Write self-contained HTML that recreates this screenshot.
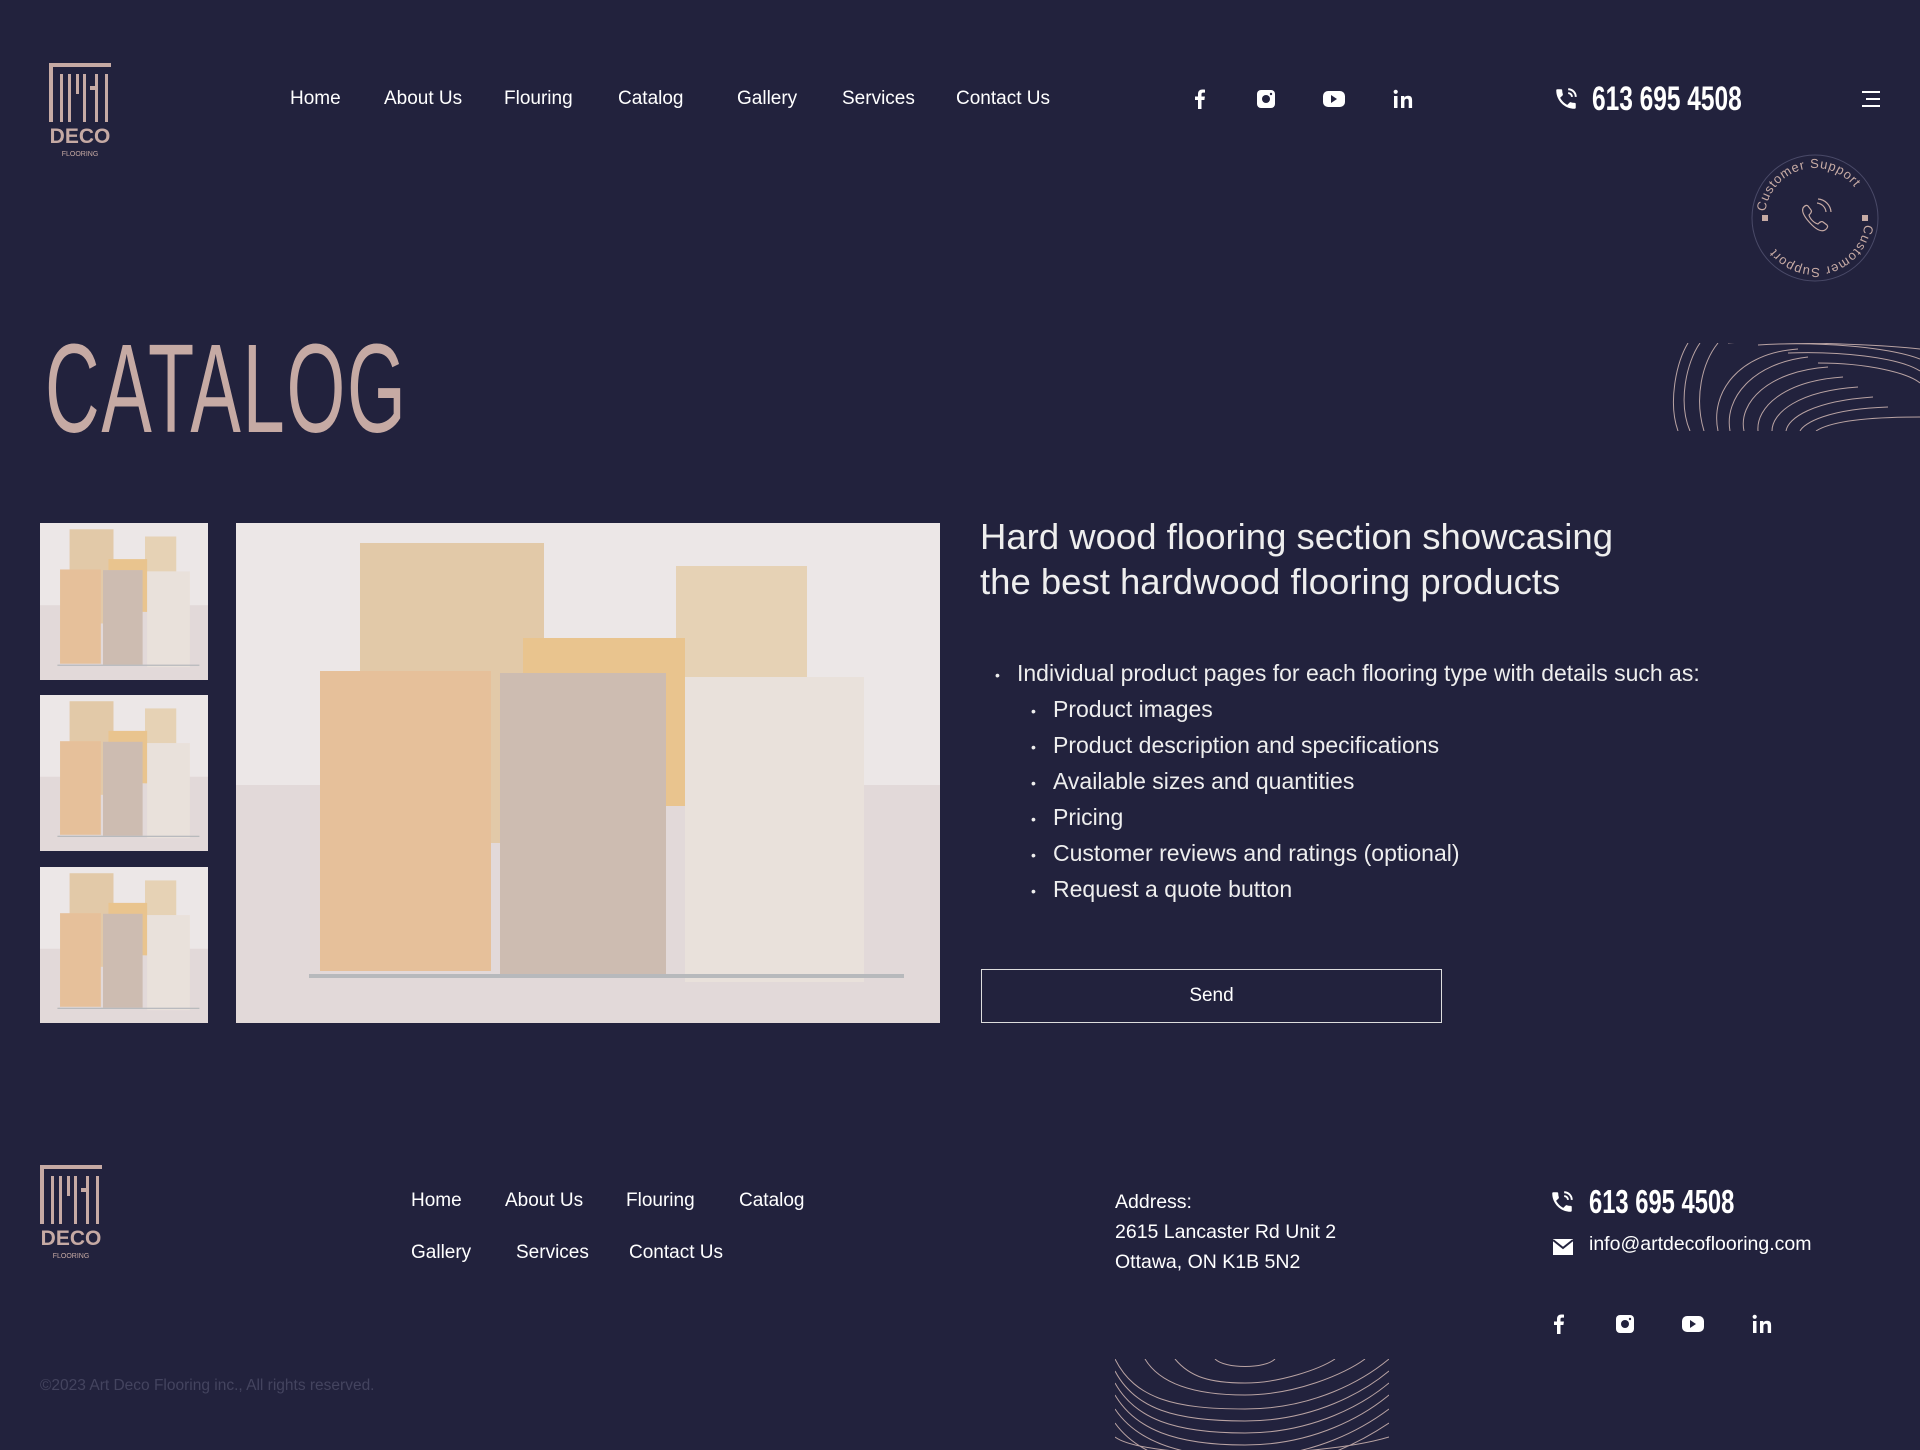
<!DOCTYPE html>
<html><head><meta charset="utf-8"><style>
*{margin:0;padding:0;box-sizing:border-box}
body{width:1920px;height:1450px;background:#22223d;font-family:"Liberation Sans",sans-serif;color:#fff;position:relative;overflow:hidden}
.a{position:absolute;white-space:nowrap}
.nav{font-size:19px;top:88px}
.cond{font-weight:bold;transform-origin:top left}
.fn{font-size:19px}
ul{list-style:none}
li{position:relative;padding-left:0}
li:before{content:"•";position:absolute;left:-22px;font-size:14px;top:2px}
</style></head><body>
<svg width="0" height="0" style="position:absolute">
<defs>
<symbol id="logo" viewBox="0 0 66 100">
<rect x="0" y="0" width="62" height="4" fill="#c6aaa4"/>
<rect x="0" y="0" width="4" height="59" fill="#c6aaa4"/>
<rect x="11" y="11" width="3" height="48" fill="#c6aaa4"/>
<rect x="19" y="11" width="3" height="48" fill="#c6aaa4"/>
<rect x="27" y="11" width="3" height="20" fill="#c6aaa4"/>
<rect x="34" y="11" width="3" height="48" fill="#c6aaa4"/>
<rect x="41" y="23" width="5" height="4" fill="#c6aaa4"/>
<rect x="46" y="11" width="3" height="48" fill="#c6aaa4"/>
<rect x="56" y="11" width="3" height="48" fill="#c6aaa4"/>
<text x="31" y="80" text-anchor="middle" font-family="Liberation Sans" font-weight="bold" font-size="21" fill="#c6aaa4">DECO</text>
<text x="31" y="93" text-anchor="middle" font-family="Liberation Sans" font-size="7" fill="#c6aaa4">FLOORING</text>
</symbol>
<symbol id="img" viewBox="0 0 704 500" preserveAspectRatio="none">
<rect width="704" height="500" fill="#ece7e7"/>
<rect y="262" width="704" height="238" fill="#e2d9d9"/>
<rect x="124" y="20" width="184" height="300" fill="#e2c9a8"/>
<rect x="440" y="43" width="131" height="240" fill="#e6d2b5"/>
<rect x="287" y="115" width="162" height="168" fill="#e9c48e"/>
<rect x="84" y="148" width="171" height="300" fill="#e6c09a"/>
<rect x="264" y="150" width="166" height="301" fill="#cdbcb1"/>
<rect x="449" y="154" width="179" height="305" fill="#e9e1db"/>
<rect x="73" y="451" width="595" height="4" fill="#b7b9bc"/>
</symbol>
<symbol id="ph" viewBox="0 0 24 24"><path d="M6.6 10.8c1.4 2.8 3.8 5.1 6.6 6.6l2.2-2.2c.3-.3.7-.4 1-.2 1.1.4 2.300.6 3.600.6.600 0 1 .4 1 1V20c0 .6-.4 1-1 1C10.6 21 3 13.4 3 4c0-.6.4-1 1-1h3.5c.6 0 1 .4 1 1 0 1.3.2 2.5.6 3.6.1.3 0 .7-.2 1z" fill="#fff"/><path d="M14 3a7 7 0 0 1 7 7M14 6.5a3.5 3.5 0 0 1 3.5 3.5" stroke="#fff" stroke-width="1.8" fill="none"/></symbol>
<symbol id="soc" viewBox="0 0 240 24">
<path d="M9 22v-9H6v-3.5h3V7c0-3 1.8-4.5 4.4-4.5 1.2 0 2.3.1 2.6.1v3h-1.8c-1.4 0-1.7.7-1.7 1.7v2.2h3.4l-.5 3.5h-2.9v9z" fill="#fff"/>
<g transform="translate(9,0)"><rect x="59" y="3" width="18" height="18" rx="4" fill="#fff"/><circle cx="68" cy="12" r="4" fill="#22223d"/><circle cx="73" cy="7" r="1.2" fill="#22223d"/></g>
<g transform="translate(20,0)"><rect x="114" y="4" width="22" height="16" rx="5" fill="#fff"/><path d="M122 8v8l6-4z" fill="#22223d"/></g>
<g transform="translate(31,0)"><rect x="174" y="9" width="3.5" height="12" fill="#fff"/><circle cx="175.7" cy="4.8" r="2.1" fill="#fff"/><path d="M181 9h3.3v1.7c.7-1.2 2-2 3.8-2 3.3 0 4 2 4 4.8V21h-3.4v-6.6c0-1.6-.3-2.7-1.9-2.7s-2.4 1.2-2.4 2.7V21H181z" fill="#fff"/></g>
</symbol>
</defs></svg>

<!-- header -->
<svg class="a" style="left:49px;top:63px" width="66" height="100"><use href="#logo"/></svg>
<div class="a nav" style="left:290px">Home</div>
<div class="a nav" style="left:384px">About Us</div>
<div class="a nav" style="left:504px">Flouring</div>
<div class="a nav" style="left:618px">Catalog</div>
<div class="a nav" style="left:737px">Gallery</div>
<div class="a nav" style="left:842px">Services</div>
<div class="a nav" style="left:956px">Contact Us</div>
<svg class="a" style="left:1189px;top:87px" width="240" height="24"><use href="#soc"/></svg>
<svg class="a" style="left:1553px;top:86px" width="26" height="26"><use href="#ph"/></svg>
<div class="a cond" style="left:1592px;top:80px;font-size:34px;transform:scaleX(0.72)">613 695 4508</div>
<div class="a" style="left:1862px;top:91px;width:18px;height:2px;background:#fff"></div>
<div class="a" style="left:1866px;top:98px;width:14px;height:2px;background:#fff"></div>
<div class="a" style="left:1862px;top:105px;width:18px;height:2px;background:#fff"></div>
<svg class="a" style="left:1750px;top:153px" width="130" height="130" viewBox="0 0 130 130">
<defs><path id="cp" d="M65 65m-50 0a50 50 0 1 1 100 0a50 50 0 1 1 -100 0"/></defs>
<circle cx="65" cy="65" r="63" fill="none" stroke="#4a4a68" stroke-width="1"/>
<text font-family="Liberation Sans" font-size="13" fill="#c6aaa4" letter-spacing="0.8"><textPath href="#cp" startOffset="2%">Customer Support</textPath></text>
<text font-family="Liberation Sans" font-size="13" fill="#c6aaa4" letter-spacing="0.8"><textPath href="#cp" startOffset="52%">Customer Support</textPath></text>
<rect x="12" y="62" width="6" height="6" fill="#c6aaa4"/><rect x="112" y="62" width="6" height="6" fill="#c6aaa4"/>
<path d="M53 55c2-3 4-3 5-2l3 4c1 1 0 3-1 4l-1 1c1 4 5 8 9 9l1-1c1-1 3-2 4-1l4 3c1 1 1 3-2 5-3 2-8 0-13-5s-11-12-9-17z" fill="none" stroke="#c6aaa4" stroke-width="1.2"/>
<path d="M67 50a10 10 0 0 1 9 9M68 46a14 14 0 0 1 13 13" fill="none" stroke="#c6aaa4" stroke-width="1.2"/>
</svg>

<div class="a" style="left:45px;top:316px;font-size:126px;color:#c6aaa4;transform:scaleX(0.6);transform-origin:top left;letter-spacing:3px">CATALOG</div>
<svg class="a" style="left:1668px;top:343px" width="252" height="88" viewBox="0 0 252 88">
<g fill="none" stroke="#b9a3a3" stroke-width="1">
<path d="M10 88C0 60 8 20 20 0"/><path d="M22 88C10 60 18 20 32 0"/><path d="M36 88C26 55 34 20 50 0"/>
<path d="M50 88C42 50 70 10 130 6"/><path d="M62 88C56 55 85 20 140 14"/><path d="M76 88C70 60 100 28 160 24"/>
<path d="M90 88C88 65 115 38 175 34"/><path d="M104 88C104 70 130 48 190 44"/><path d="M118 88C120 75 145 58 205 54"/>
<path d="M132 88C136 80 160 66 220 64"/><path d="M148 88C160 80 190 74 252 74"/><path d="M60 0C70 -2 200 0 252 6"/>
<path d="M90 2C150 -2 220 4 252 16"/><path d="M120 10C170 8 230 14 252 28"/><path d="M150 20C200 20 240 30 252 40"/>
</g></svg>

<!-- images -->
<svg class="a" style="left:40px;top:523px" width="168" height="157"><use href="#img" width="168" height="157"/></svg>
<svg class="a" style="left:40px;top:695px" width="168" height="156"><use href="#img" width="168" height="156"/></svg>
<svg class="a" style="left:40px;top:867px" width="168" height="156"><use href="#img" width="168" height="156"/></svg>
<svg class="a" style="left:236px;top:523px" width="704" height="500"><use href="#img" width="704" height="500"/></svg>

<div class="a" style="left:980px;top:514px;font-size:36.5px;line-height:45px;color:#eee">Hard wood flooring section showcasing<br>the best hardwood flooring products</div>
<ul class="a" style="left:1017px;top:655px;font-size:23px;line-height:36px;color:#eee">
<li>Individual product pages for each flooring type with details such as:</li>
<li style="margin-left:36px">Product images</li>
<li style="margin-left:36px">Product description and specifications</li>
<li style="margin-left:36px">Available sizes and quantities</li>
<li style="margin-left:36px">Pricing</li>
<li style="margin-left:36px">Customer reviews and ratings (optional)</li>
<li style="margin-left:36px">Request a quote button</li>
</ul>
<div class="a" style="left:981px;top:969px;width:461px;height:54px;border:1px solid #ddd;text-align:center;line-height:52px;font-size:19px">Send</div>

<!-- footer -->
<svg class="a" style="left:40px;top:1165px" width="66" height="100"><use href="#logo"/></svg>
<div class="a fn" style="left:411px;top:1190px">Home</div>
<div class="a fn" style="left:505px;top:1190px">About Us</div>
<div class="a fn" style="left:626px;top:1190px">Flouring</div>
<div class="a fn" style="left:739px;top:1190px">Catalog</div>
<div class="a fn" style="left:411px;top:1242px">Gallery</div>
<div class="a fn" style="left:516px;top:1242px">Services</div>
<div class="a fn" style="left:629px;top:1242px">Contact Us</div>
<div class="a" style="left:1115px;top:1187px;font-size:19.5px;line-height:30px">Address:<br>2615 Lancaster Rd Unit 2<br>Ottawa, ON K1B 5N2</div>
<svg class="a" style="left:1549px;top:1189px" width="26" height="26"><use href="#ph"/></svg>
<div class="a cond" style="left:1589px;top:1183px;font-size:33px;transform:scaleX(0.72)">613 695 4508</div>
<svg class="a" style="left:1552px;top:1238px" width="22" height="18" viewBox="0 0 22 18"><rect x="1" y="1" width="20" height="16" fill="#fff"/><path d="M1 2l10 8 10-8" stroke="#22223d" stroke-width="2" fill="none"/></svg>
<div class="a" style="left:1589px;top:1233px;font-size:19.5px">info@artdecoflooring.com</div>
<svg class="a" style="left:1548px;top:1312px" width="240" height="24"><use href="#soc"/></svg>
<div class="a" style="left:40px;top:1377px;font-size:15.5px;color:#44445f">©2023 Art Deco Flooring inc., All rights reserved.</div>
<svg class="a" style="left:1115px;top:1359px" width="274" height="91" viewBox="0 0 274 91">
<g fill="none" stroke="#b9a3a3" stroke-width="1">
<path d="M0 0C20 40 60 50 130 50S250 20 274 0"/><path d="M0 12C20 50 60 62 130 62S250 32 274 12"/>
<path d="M0 24C20 60 60 74 130 74S250 44 274 24"/><path d="M0 36C20 70 60 86 130 86S250 56 274 36"/>
<path d="M0 50C20 80 60 98 130 98S250 68 274 50"/><path d="M0 64C20 92 60 110 130 110S250 80 274 64"/>
<path d="M0 78C30 100 200 100 274 78"/><path d="M30 0C45 25 80 36 130 36S230 15 250 0"/>
<path d="M60 0C75 18 95 24 130 24S205 10 220 0"/><path d="M100 0C110 10 150 10 160 0"/>
</g></svg>
</body></html>
